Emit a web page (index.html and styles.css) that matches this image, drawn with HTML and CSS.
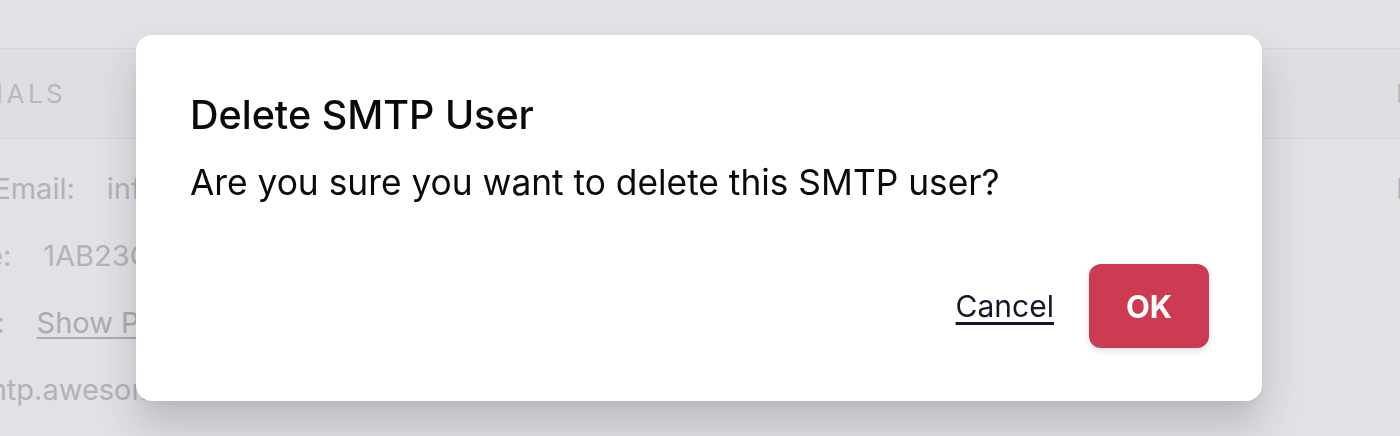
FILE: index.html
```html
<!DOCTYPE html>
<html lang="en">
<head>
  <meta charset="UTF-8" />
  <meta name="viewport" content="width=device-width, initial-scale=1.0"/>
  <title>Delete SMTP User</title>
  <link rel="stylesheet" href="styles.css">
</head>
<body>
  <div class="page">
    <div class="panel main">
      <div class="panel-head">
        <span class="panel-title">SMTP Credentials</span>
      </div>
      <div class="panel-body">
        <div class="field"><span class="label">Business Email:</span><span class="value">info@awesome.com</span></div>
        <div class="field"><span class="label">Username:</span><span class="value">1AB23CD45</span></div>
        <div class="field"><span class="label">Password:</span><a class="value link" href="#">Show Password</a></div>
        <div class="field"><span class="label">Host:</span><span class="value">smtp.awesome.com</span></div>
      </div>
    </div>
    <div class="panel side">
      <div class="panel-head">
        <span class="panel-title">Limits</span>
      </div>
      <div class="panel-body">
        <div class="field"><span class="value">Rate</span></div>
      </div>
    </div>
  </div>

  <!-- confirm dialog -->
  <div class="overlay">
    <div class="dialog">
      <h2 class="dialog-title">Delete SMTP User</h2>
      <p class="dialog-text">Are you sure you want to delete this SMTP user?</p>
      <div class="dialog-actions">
        <a class="cancel-link" href="#">Cancel</a>
        <button class="ok-btn">OK</button>
      </div>
    </div>
  </div>
</body>
</html>
```

FILE: styles.css
```css
body {
  margin: 0;
  height: 100vh;
  overflow: hidden;
  background-color: #e2e1e6;
  font-family: Inter, "Noto Sans", sans-serif;
}

.page {
  display: flex;
  margin-left: -260px;
  padding-top: 48px;
}

.panel {
  flex-shrink: 0;
}

.panel.main {
  width: 1656px;
}

.panel.side {
  width: 600px;
}

.panel-head {
  height: 89px;
  display: flex;
  align-items: center;
  border-top: 1px solid #d7d6db;
  border-bottom: 1px solid #d7d6db;
  background-color: #dfdee3;
}

.main .panel-head {
  padding-left: 11px;
}

.panel-title {
  font-size: 26px;
  letter-spacing: 3.5px;
  text-transform: uppercase;
  color: #b9b8bd;
}

.panel-body {
  display: flex;
  flex-direction: column;
  gap: 32px;
  padding-top: 32px;
}

.main .panel-body {
  padding-left: 122px;
}

.field {
  display: flex;
  gap: 32px;
  font-size: 29px;
  color: #b3b2b8;
}

.link {
  color: #acabb1;
  text-decoration: underline;
  text-underline-offset: 4px;
}

.overlay {
  position: fixed;
  top: 0;
  left: 0;
  right: 0;
  bottom: 0;
  padding: 35px 0 0 136px;
}

.dialog {
  width: 1126px;
  height: 366px;
  box-sizing: border-box;
  padding: 52px 53px 53px 54px;
  background: #fff;
  border-radius: 16px;
  box-shadow: 0 26px 40px rgba(40, 40, 50, 0.2), 0 4px 10px rgba(0, 0, 0, 0.05);
  display: flex;
  flex-direction: column;
}

.dialog-title {
  margin: 0;
  font-size: 39.5px;
  font-weight: 500;
  line-height: 56px;
  color: #0a0a0a;
}

.dialog-text {
  margin: 16px 0 0;
  font-size: 35.3px;
  line-height: 48px;
  color: #0a0a0a;
}

.dialog-actions {
  margin-top: auto;
  display: flex;
  justify-content: flex-end;
  align-items: center;
  gap: 35px;
}

.cancel-link {
  font-size: 30px;
  color: #16162a;
  text-decoration: underline;
  text-underline-offset: 5px;
}

.ok-btn {
  width: 120px;
  height: 84px;
  border: none;
  border-radius: 12px;
  background-color: #cc3b51;
  color: #fff;
  font-family: inherit;
  font-size: 31px;
  font-weight: 700;
  box-shadow: 0 3px 6px rgba(0, 0, 0, 0.12);
  cursor: pointer;
}
```
